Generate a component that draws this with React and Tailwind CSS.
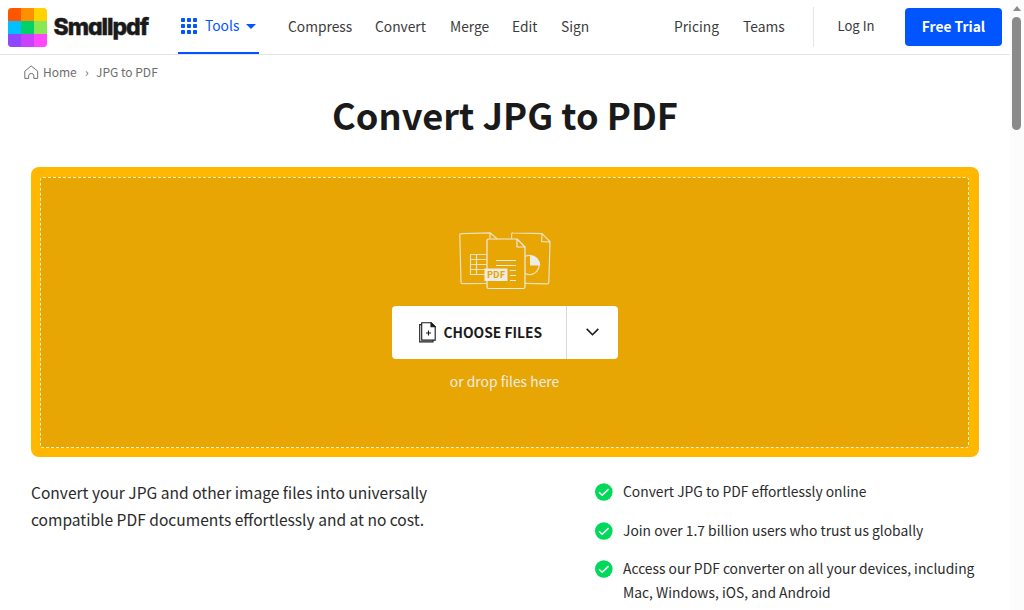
import React from "react";

const logoColors = [
  "#ff5500", "#ff9000", "#ffd200",
  "#00c0ff", "#00d267", "#87e853",
  "#8f47ff", "#ca41fc", "#ff47fd",
];

function Logo() {
  return (
    <a className="flex items-center">
      <svg width="39" height="39" viewBox="0 0 39 39" className="block shrink-0">
        <defs>
          <clipPath id="logo-clip">
            <rect width="39" height="39" rx="3.5" />
          </clipPath>
        </defs>
        <g clipPath="url(#logo-clip)" shapeRendering="crispEdges">
          {logoColors.map((c, i) => (
            <rect key={c} x={(i % 3) * 13} y={Math.floor(i / 3) * 13} width="13" height="13" fill={c} />
          ))}
        </g>
      </svg>
      <span className="ml-[6.5px] w-[96.5px] whitespace-nowrap font-['Inter',sans-serif] text-[23px] leading-[38px] font-extrabold tracking-[-1.05px] text-[#1a1a1a] [-webkit-text-stroke:0.4px_#1a1a1a] [font-feature-settings:'cv11','ss03']">
        Smallpdf
      </span>
    </a>
  );
}

function GridIcon() {
  return (
    <svg width="16" height="16" viewBox="0 0 16 16" fill="#0055ff" className="block shrink-0">
      {[0, 6, 12].map((y) => [0, 6, 12].map((x) => <rect key={`${x}-${y}`} x={x} y={y} width="4" height="4" rx="0.8" />))}
    </svg>
  );
}

function HomeIcon() {
  return (
    <svg width="15" height="15" viewBox="0 0 15 15" fill="none" stroke="#6e6e6e" strokeWidth="1" strokeLinejoin="round" className="block shrink-0">
      <path d="M0.8 6.2 7.2 0.9l6.5 5.3v7.2H9.8v-2.9a2.6 2.6 0 0 0-5.1 0v2.9H0.8z" />
    </svg>
  );
}

function FilesArt() {
  return (
    <svg width="92" height="58" viewBox="0 0 92 58" fill="none" stroke="#ecebe6" strokeWidth="1.2" strokeLinejoin="round" className="block">
      <g strokeOpacity="0.85">
        <path d="M27.5 51.500 3.500 51.700Q2 51.700 2 50.200L0.800 3Q0.800 1.600 2.300 1.600L31 0.800l7 6" />
        <path d="M31 0.800v5.400" />
        <path d="M52.600 6.500V2.300q0-1.500 1.500-1.400L83 1.600l8 8-1.200 41q0 1.300-1.500 1.300L66 51.400" />
        <path d="M83 1.600 82.700 9.600l8.300 0.300" />
        <path d="M27.500 22.500H11.500V42.500H27.500M11.500 27.500H27.500M11.500 32.500H27.500M11.500 37.500H27.500M17.500 22.500V42.500" />
        <path d="M66 24.500A9.600 9.600 0 1 1 66 41.500" />
      </g>
      <path d="M71 23.300V33.500H81.200A10.200 10.200 0 0 0 71 23.300z" fill="#ecebe6" stroke="none" />
      <path d="M29.500 7H58L66 15V55q0 1.500-1.500 1.500H29.500q-1.500 0-1.500-1.500V8.500q0-1.500 1.500-1.500z" fill="#e8a604" strokeWidth="1.200" />
      <path d="M58 7V15H66" />
      <path d="M37 28.500H57M37 33.500H57M51 38.500H57M51 43.500H57M51 48.500H57" />
      <rect x="25.500" y="36.500" width="23" height="12.500" fill="#ecebe6" stroke="none" />
      <text x="37" y="46" textAnchor="middle" fontFamily="'Noto Sans CJK SC', sans-serif" fontWeight="700" fontSize="9.200" fill="#e8a604" stroke="none">PDF</text>
    </svg>
  );
}

function AddFileIcon() {
  return (
    <svg width="17" height="21" viewBox="0 0 17 21" fill="none" stroke="#1a1a1a" strokeWidth="1.1" className="block shrink-0">
      <path d="M2.500 2.600H0.700V19.900H14V18.300" />
      <path d="M2.700 0.700H12L16.200 4.800V18.100H2.700z" />
      <path d="M12 0.700V4.800H16.200z" fill="#1a1a1a" />
      <path d="M9.500 8.500v5M7 11h5" />
    </svg>
  );
}

function Check() {
  return (
    <svg width="18" height="18" viewBox="0 0 18 18" className="mt-[3px] block shrink-0">
      <circle cx="8.800" cy="9" r="8.800" fill="#00d95a" />
      <path d="M4 9.200 7.200 12.200 13.600 6.100" fill="none" stroke="#fff" strokeWidth="1.500" />
    </svg>
  );
}

function NavLink({ className, children }) {
  return <a className={`block whitespace-nowrap ${className}`}>{children}</a>;
}

function Header() {
  return (
    <header className="flex h-[55px] border-b border-[#e5e5e5] pl-2 text-[13.8px] leading-[52px] text-[#3b3b3b]">
      <Logo />
      <div className="ml-7 flex h-[54px] w-[81px] items-center border-b-2 border-[#0055ff] pl-[3px] text-[#0055ff]">
        <GridIcon />
        <span className="ml-2 h-[52px] w-[35px] whitespace-nowrap leading-[50px]">Tools</span>
        <svg width="10" height="5" viewBox="0 0 10 5" className="ml-[6px] block"><path d="M0 0h10L5 5z" fill="#0055ff" /></svg>
      </div>
      <nav className="ml-[29px] flex">
        <NavLink className="w-[87px]">Compress</NavLink>
        <NavLink className="w-[75px]">Convert</NavLink>
        <NavLink className="w-[62px]">Merge</NavLink>
        <NavLink className="w-[49px]">Edit</NavLink>
        <NavLink className="w-[113px]">Sign</NavLink>
        <NavLink className="w-[69px]">Pricing</NavLink>
        <NavLink className="w-[70px]">Teams</NavLink>
      </nav>
      <div className="mt-[7px] h-10 w-px bg-[#e5e5e5]" />
      <a className="ml-[23.5px] w-[67.5px] whitespace-nowrap text-[13.1px] leading-[51px]">Log In</a>
      <a className="mt-2 h-[38px] w-[97px] rounded-[4px] bg-[#0055ff] text-center text-[13.8px] leading-[36px] font-bold whitespace-nowrap text-white">
        Free Trial
      </a>
    </header>
  );
}

function Scrollbar() {
  return (
    <div className="flex w-[14px] shrink-0 flex-col items-center bg-[#fcfcfc] pt-[6px] pr-px">
      <svg width="8" height="5" viewBox="0 0 8 5" className="block"><path d="M4 0 8 5H0z" fill="#8b8b8b" /></svg>
      <div className="mt-[6px] h-[113px] w-[9px] rounded-full bg-[#8b8b8b]" />
    </div>
  );
}

function DropZone() {
  return (
    <section className="mr-[31.5px] ml-[31px] h-[290px] rounded-lg bg-[#ffb700] py-[9.500px] pr-[9.500px] pl-[9px]">
      <div className="flex h-full flex-col items-center rounded-[3px] border border-dashed border-[#fff1cc] bg-[#e8a604] pt-[54px]">
        <FilesArt />
        <div className="mt-4 flex h-[53px] w-[226px] rounded-[4px] bg-white text-[#1a1a1a]">
          <button className="flex w-[174px] items-center pl-[27px]">
            <AddFileIcon />
            <span className="ml-2 text-[13.8px] leading-[52px] font-bold whitespace-nowrap">CHOOSE FILES</span>
          </button>
          <button className="flex flex-1 items-center justify-center border-l border-[#d9d9d9]">
            <svg width="13" height="8" viewBox="0 0 13 8" fill="none" stroke="#1a1a1a" strokeWidth="1.600" className="block"><path d="M0.700 0.900 6.500 6.700 12.300 0.900" /></svg>
          </button>
        </div>
        <p className="mt-[11px] text-[13.9px] leading-[22px] text-[#ecebe6]">or drop files here</p>
      </div>
    </section>
  );
}

function Feature({ children }) {
  return (
    <li className="flex">
      <Check />
      <span className="ml-[10px] whitespace-nowrap">{children}</span>
    </li>
  );
}

export default function App() {
  return (
    <div className="flex h-[610px] w-[1024px] overflow-hidden bg-white font-['Noto_Sans_CJK_SC',sans-serif] text-[#2b2b2b]">
      <div className="w-[1010px] shrink-0">
        <Header />
        <div className="flex h-[34px] items-center pl-6 text-[12px] text-[#6e6e6e]">
          <HomeIcon />
          <span className="ml-1 w-[42px] whitespace-nowrap">Home</span>
          <span className="w-[11px]">›</span>
          <span>JPG to PDF</span>
        </div>
        <h1 className="h-[78px] text-center text-[36.2px] leading-[50px] font-bold text-[#1a1a1a]">Convert JPG to PDF</h1>
        <DropZone />
        <div className="flex pt-[22px] pl-[31px]">
          <p className="w-[564px] text-[15.570px] leading-[27px]">
            Convert your JPG and other image files into universally
            <br />
            compatible PDF documents effortlessly and at no cost.
          </p>
          <ul className="flex flex-col gap-[15.400px] pt-px text-[13.850px] leading-[23.300px]">
            <Feature>Convert JPG to PDF effortlessly online</Feature>
            <Feature>Join over 1.7 billion users who trust us globally</Feature>
            <Feature>
              Access our PDF converter on all your devices, including
              <br />
              Mac, Windows, iOS, and Android
            </Feature>
          </ul>
        </div>
      </div>
      <Scrollbar />
    </div>
  );
}
